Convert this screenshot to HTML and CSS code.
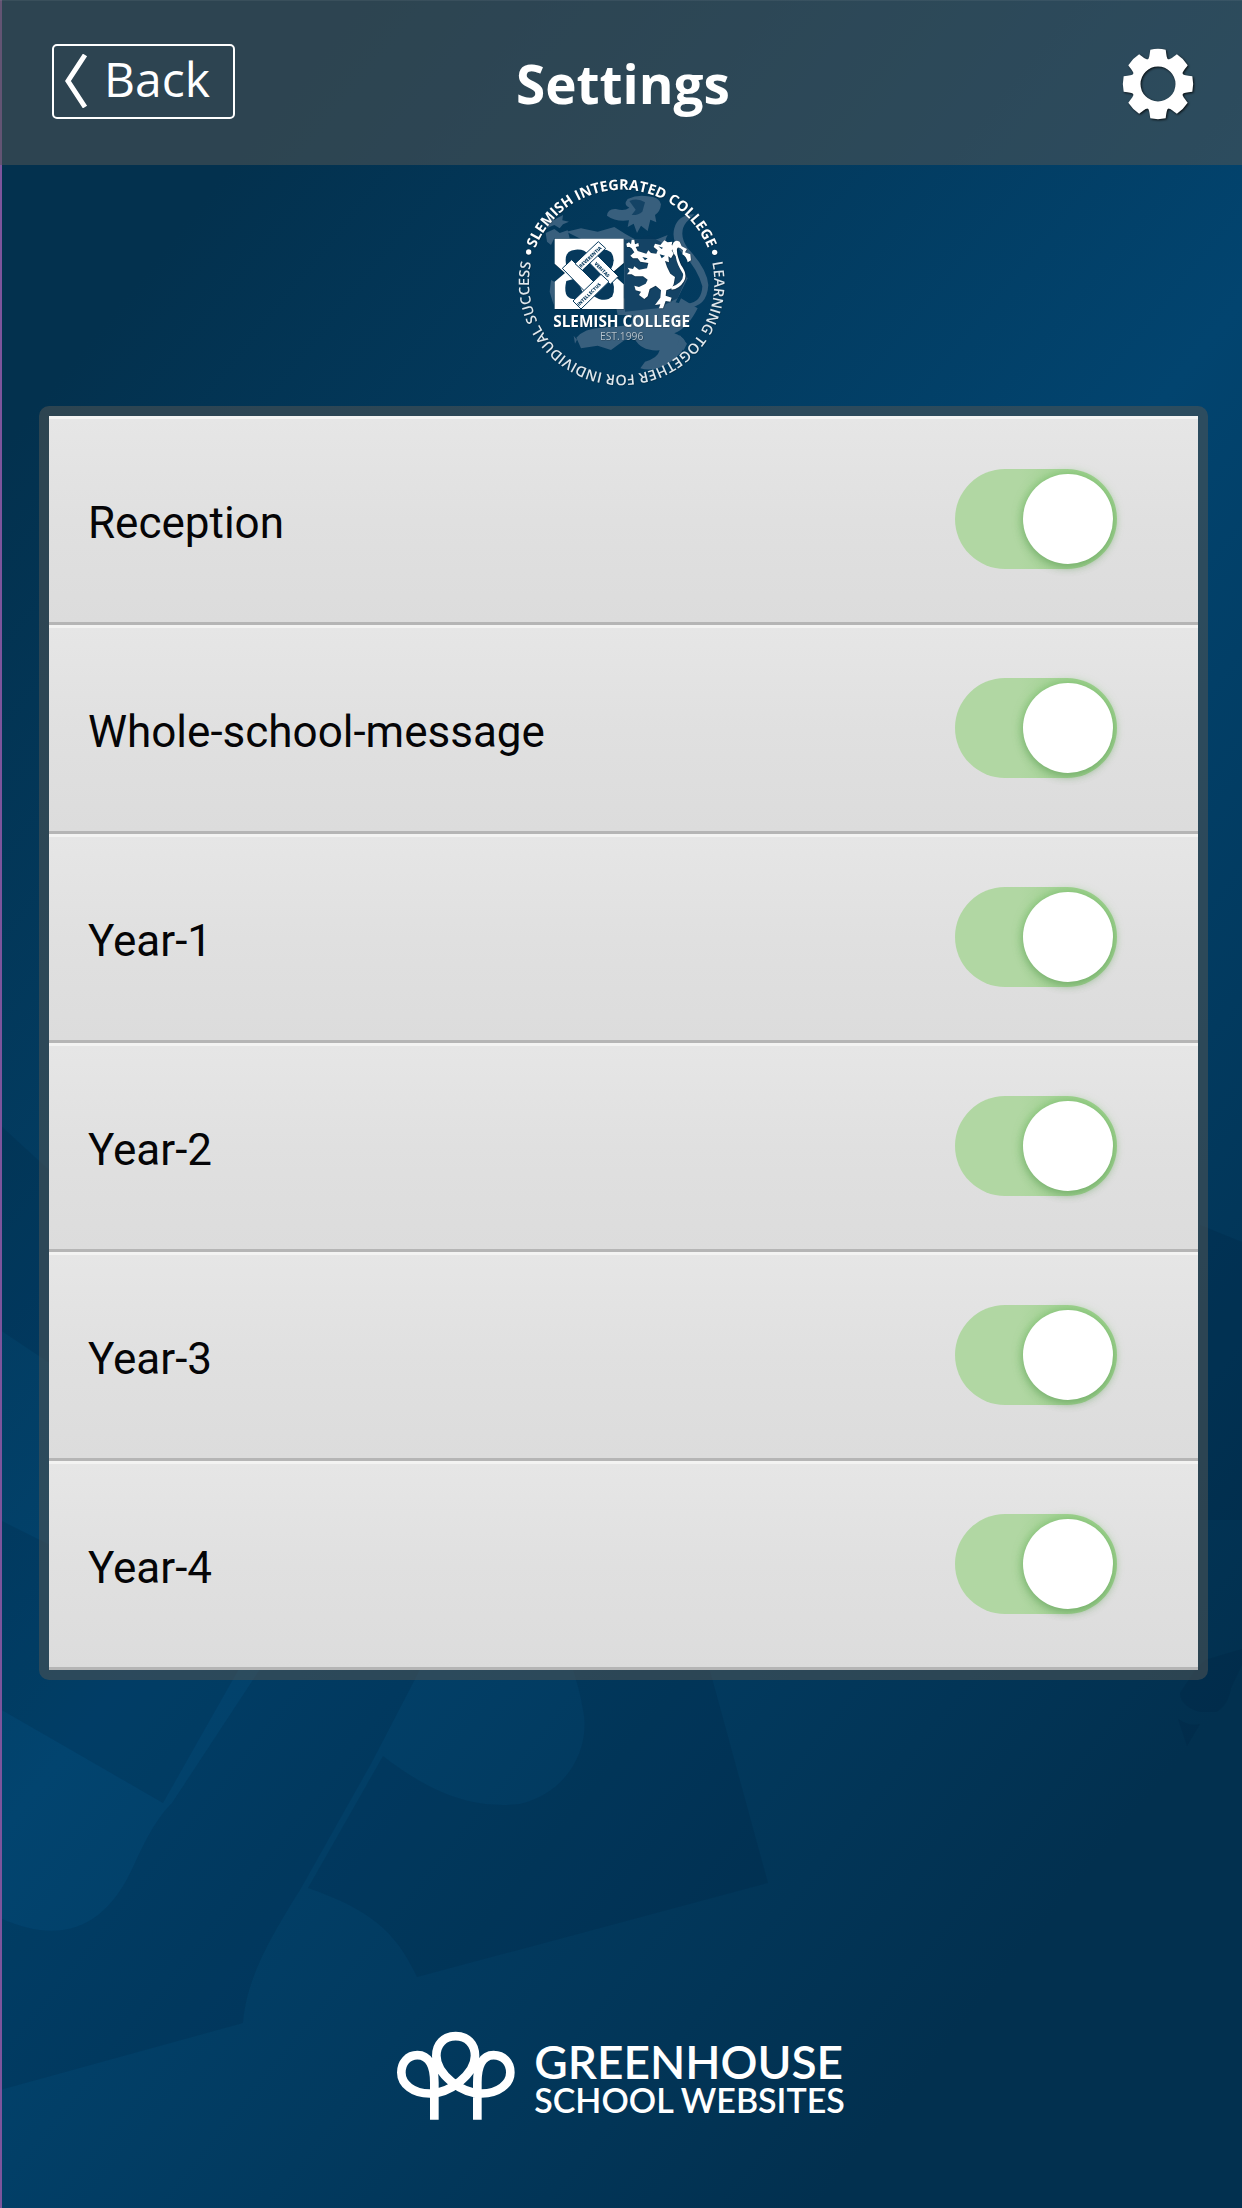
FILE: index.html
```html
<!DOCTYPE html>
<html lang="en">
<head>
<meta charset="utf-8">
<meta name="viewport" content="width=device-width, initial-scale=1">
<title>Settings</title>
<link rel="stylesheet" href="styles.css">
</head>
<body class="app">
<svg class="backdrop" viewBox="0 0 1242 2208" preserveAspectRatio="none" aria-hidden="true">
  <g fill="#021c33" fill-opacity=".15">
    <path d="M0 1125L60 1180V1370L0 1330Z"/>
    <path d="M0 1520L60 1550V1660L244 1660L163 1803L0 1709Z"/>
    <path d="M266 1660H425L372 1762L300 1890C262 1950 246 1985 243 2023L0 2090V1918C60 1945 105 1930 134 1865C150 1830 160 1815 172 1803Z"/>
    <path d="M383 1756C440 1800 480 1808 520 1804C575 1790 590 1740 583 1710Q580 1690 570 1660H707L768 1883L417 1977C395 1930 370 1910 308 1888Z"/>
    <path d="M1200 1225L1242 1242V1520H1200Z"/>
    <path d="M1195 1670L1180 1693Q1180 1706 1200 1712H1216Q1228 1706 1231 1688L1242 1665V1649L1205 1660Z"/>
    <path d="M1178 1719Q1190 1727 1200 1724L1187 1746Z"/>
  </g>
</svg>

<header class="topbar">
  <button class="back" type="button">
    <svg class="back-icon" viewBox="0 0 24 54" aria-hidden="true"><path d="M21 1L4 27L21 53" fill="none" stroke="#fff" stroke-width="5"/></svg>
    <span>Back</span>
  </button>
  <h1 class="title">Settings</h1>
  <button class="gear" type="button" aria-label="Settings menu">
    <svg class="gear-icon" viewBox="-108 -108 216 216" aria-hidden="true">
      <defs><path id="tooth" d="M-33 -70C-25 -78 -26 -86 -23 -103Q0 -108 23 -103C26 -86 25 -78 33 -70Z"/></defs>
      <circle r="66" fill="none" stroke="#fff" stroke-width="27"/>
      <g fill="#fff">
        <use href="#tooth"/><use href="#tooth" transform="rotate(45)"/><use href="#tooth" transform="rotate(90)"/><use href="#tooth" transform="rotate(135)"/>
        <use href="#tooth" transform="rotate(180)"/><use href="#tooth" transform="rotate(225)"/><use href="#tooth" transform="rotate(270)"/><use href="#tooth" transform="rotate(315)"/>
      </g>
    </svg>
  </button>
</header>

<main class="content">
  <svg class="crest" viewBox="0 0 720 690" role="img" aria-label="Slemish Integrated College crest">
    <defs>
      <path id="ring" d="M362 630A278 278 0 0 1 362 74A278 278 0 0 1 362 630"/>
      <path id="ring-low" d="M362 74A278 278 0 0 1 362 630A278 278 0 0 1 362 74"/>
    </defs>
    <g fill="#385f7d">
      <path d="M318 152Q320 130 345 132Q370 140 385 128Q365 120 380 102Q410 88 440 94Q475 96 480 118Q478 140 462 150L466 172L448 164L440 198L420 182L408 204L398 176L380 186L384 166Q345 172 318 152Z"/>
      <path d="M128 170L150 158L160 164L186 150L184 166L204 170L186 178L176 190L160 180L140 188ZM134 204L160 192L176 204L200 196L206 220H160L150 240L138 230Z"/>
      <path d="M196 200L240 190L290 200L340 186L372 206L400 222H240ZM150 345L160 350L158 420L146 380Z"/>
      <path d="M520 190Q530 150 580 148L556 172Q530 205 560 250Q618 310 622 360Q618 430 552 428L560 416Q602 412 604 364Q590 310 540 260Q510 225 520 190Z"/>
      <path d="M370 222H470L500 210Q480 240 520 270L560 340L520 420L450 432L400 430L370 400Z"/>
      <path d="M340 400H470L560 420Q540 450 520 450H350ZM400 430L520 445L540 400L590 430Q560 490 520 505Q560 520 552 545Q530 580 490 602Q450 620 418 610L432 590Q470 580 476 556Q420 560 400 520L370 526L330 555L290 542L240 550L226 518Q250 490 300 488L390 480Z"/>
      <path d="M536 510L558 536L548 556L530 540ZM218 512L228 524L222 536Z"/>
    </g>
    <path fill="#05385b" d="M385 108Q410 98 432 112L424 140Q410 152 392 150L404 134ZM470 226Q440 200 420 222L372 224V440L470 430L530 400L560 330L530 262Z" fill-opacity=".7"/>
    <g class="crest-ring">
      <text class="ring-bold"><textPath href="#ring" startOffset="50%" text-anchor="middle">SLEMISH INTEGRATED COLLEGE</textPath></text>
      <text class="ring-text"><textPath href="#ring-low" startOffset="50%" text-anchor="middle">LEARNING TOGETHER FOR INDIVIDUAL SUCCESS</textPath></text>
      <circle cx="83" cy="261" r="8"/><circle cx="641" cy="262" r="8"/>
    </g>
    <g class="crest-mark">
      <path fill="#fff" d="M161 221H368V294L332 325L368 358V432H161V350L192 324L161 296Z"/>
      <g fill="#06395c">
        <path d="M196 302Q186 256 224 254Q252 252 262 270L226 318Z"/>
        <path d="M272 270Q300 240 330 262Q346 284 330 312L300 318L262 290Z"/>
        <path d="M196 348Q184 398 216 402Q236 404 250 392L226 340Z"/>
        <path d="M276 392Q312 416 334 394Q346 368 330 340L300 332L266 372Z"/>
        <path d="M226 326L262 290L300 326L264 364Z"/>
      </g>
      <g fill="#fff" stroke="#06395c" stroke-width="3">
        <path d="M184 310L212 284L288 360L260 388Z"/>
        <path d="M256 284L280 262L352 334L328 358Z"/>
        <path d="M222 296L292 230L314 250L244 316Z"/>
        <path d="M216 408L300 328L324 350L240 432Z"/>
      </g>
      <g class="knot-text">
        <text transform="translate(240 309) rotate(-43)">REVERENTIA</text>
        <text transform="translate(279 297) rotate(45)">VERITAS</text>
        <text transform="translate(234 424) rotate(-44)">INTELLECTUS</text>
      </g>
      <g fill="#fff">
        <path d="M376 236L384 232L390 238L392 224H400L402 238L412 234L414 244L404 246L410 258L436 266L442 256L450 264L466 266L470 256L458 246L462 236L478 240L490 226L500 232L514 230L512 240L522 246L512 256L518 266L510 280L502 274L504 292L492 288L498 306L508 326L522 336L518 358L512 370L496 376L494 392L512 398L508 410L494 408L486 430L474 430L478 418L462 420L478 398L480 376L464 362L446 372L440 394L430 402L414 390L420 380L404 376L400 362L414 366L434 356L440 344L426 334L402 334L392 328L378 328L386 318L380 308L396 312L400 304L414 314L438 310L442 294L418 290L410 280L396 280L388 272L400 262L392 250L386 246L378 246Z"/>
        <path d="M510 366Q550 352 546 326Q528 300 524 274Q506 250 518 232Q524 224 536 230L542 244L558 252L552 262L568 268L570 286L560 292Q556 274 544 268L546 256Q532 242 528 252Q526 268 540 300Q562 330 548 350Q534 372 512 374Z"/>
      </g>
      <path fill="#06395c" d="M472 244L486 248L482 252ZM476 268L492 272L482 280ZM424 276L440 280L432 286Z"/>
      <text class="crest-name" x="362" y="486" text-anchor="middle">SLEMISH COLLEGE</text>
      <text class="crest-est" x="362" y="524" text-anchor="middle">EST.1996</text>
    </g>
  </svg>

  <ul class="panel">
    <li class="row"><label class="label" for="s1">Reception</label><input class="switch" id="s1" type="checkbox" role="switch" checked></li>
    <li class="row"><label class="label" for="s2">Whole-school-message</label><input class="switch" id="s2" type="checkbox" role="switch" checked></li>
    <li class="row"><label class="label" for="s3">Year-1</label><input class="switch" id="s3" type="checkbox" role="switch" checked></li>
    <li class="row"><label class="label" for="s4">Year-2</label><input class="switch" id="s4" type="checkbox" role="switch" checked></li>
    <li class="row"><label class="label" for="s5">Year-3</label><input class="switch" id="s5" type="checkbox" role="switch" checked></li>
    <li class="row"><label class="label" for="s6">Year-4</label><input class="switch" id="s6" type="checkbox" role="switch" checked></li>
  </ul>
</main>

<footer class="footer">
  <svg class="trees" viewBox="57 61 354 266" aria-hidden="true">
    <path d="M169 327V215C169 165 152 133 118 133C90 133 70 155 70 185C70 220 105 248 155 248C215 248 291 190 291 135C291 100 268 76 233 76C198 76 175 100 175 135C175 190 250 248 311 248C360 248 397 220 397 185C397 155 376 133 347 133C313 133 298 165 298 215V327" fill="none" stroke="#fff" stroke-width="26"/>
  </svg>
  <p class="brand"><span class="brand-top">GREENHOUSE</span><span class="brand-sub">SCHOOL WEBSITES</span></p>
</footer>
</body>
</html>
```
FILE: styles.css
```css
* {
  box-sizing: border-box;
}

.app {
  position: relative;
  display: flex;
  flex-direction: column;
  min-height: 100vh;
  margin: 0;
  background: linear-gradient(129deg, #03314e 12%, #02446f 49%, #02304f 86%);
  box-shadow: inset 2px 0 #7d549c;
  color: #fff;
  font-family: "Open Sans", "Noto Sans", sans-serif;
}

.backdrop {
  position: absolute;
  inset: 0;
  z-index: -1;
  width: 100%;
  height: 100%;
}

.topbar {
  display: grid;
  grid-template-columns: 1fr auto 1fr;
  align-items: center;
  height: 165px;
  padding: 0 48px 4px 52px;
  border-top: 1px solid rgba(255, 255, 255, 0.06);
  background: rgba(79, 83, 84, 0.56);
}

.back {
  display: flex;
  align-items: center;
  justify-self: start;
  gap: 16px;
  height: 75px;
  padding: 0 23px 4px 10px;
  border: 2px solid #fff;
  border-radius: 5px;
  background: none;
  color: inherit;
  font: 400 48px/68px "Open Sans", sans-serif;
}

.back-icon {
  width: 24px;
  height: 54px;
  margin-top: 4px;
}

.title {
  margin: 0;
  padding-top: 6px;
  font-size: 53px;
  font-weight: 700;
  line-height: 72px;
}

.gear {
  justify-self: end;
  width: 72px;
  height: 72px;
  margin-top: 6px;
  padding: 0;
  border: 0;
  background: none;
}

.gear-icon {
  display: block;
  width: 72px;
  height: 72px;
  filter: drop-shadow(1px 1px 1px rgba(0, 0, 0, 0.8));
}

.content {
  display: flex;
  flex-direction: column;
  align-items: center;
}

.crest {
  width: 240px;
  height: 230px;
}

.crest-ring,
.crest-mark {
  filter: drop-shadow(1px 1px 1px rgba(0, 0, 0, 0.5));
}

.crest-ring {
  fill: #fff;
}

.ring-bold {
  font-size: 43px;
  font-weight: 700;
}

.ring-text {
  font-size: 43px;
  font-weight: 600;
  fill: #dfe8ee;
}

.knot-text {
  font-size: 14px;
  font-weight: 800;
  fill: #06395c;
}

.crest-name {
  font-size: 46px;
  font-weight: 700;
  fill: #fff;
}

.crest-est {
  font-size: 31px;
  fill: #b4c4d0;
}

.panel {
  align-self: stretch;
  margin: 11px 34px 0 39px;
  padding: 0;
  border: 10px solid rgba(79, 83, 84, 0.56);
  border-radius: 10px;
  background-clip: padding-box;
  list-style: none;
}

.row {
  display: flex;
  align-items: center;
  justify-content: space-between;
  height: 209px;
  padding: 0 81px 0 39px;
  border-top: 3px solid #f3f3f2;
  border-bottom: 3px solid #b5b5b5;
  background: linear-gradient(#e6e6e6, #e0e0e0 50%, #dcdcdc);
  color: #050507;
}

.label {
  padding-top: 5px;
  font: 400 44px/56px Roboto, sans-serif;
}

.switch {
  appearance: none;
  flex: none;
  width: 162px;
  height: 100px;
  margin: 0 0 3px;
  padding: 5px 4px;
  border-radius: 50px;
  background: #c4c4c4;
}

.switch::before {
  content: "";
  display: block;
  width: 90px;
  height: 90px;
  border-radius: 50%;
  background: #fff;
}

.switch:checked {
  background: linear-gradient(90deg, #b1d7a3 40%, #a2d293 75%);
}

.switch:checked::before {
  margin-left: auto;
  box-shadow: 0 4px 8px rgba(70, 120, 70, 0.3), 0 0 8px 2px rgba(120, 195, 105, 0.6);
}

.footer {
  display: flex;
  align-items: center;
  justify-content: center;
  gap: 19px;
  margin-top: auto;
  padding-bottom: 88px;
}

.trees {
  width: 118px;
  height: 89px;
}

.brand {
  display: flex;
  flex-direction: column;
  margin: 0;
  padding-top: 8px;
  font-family: Lato, sans-serif;
  font-weight: 600;
}

.brand-top {
  font-size: 46px;
  line-height: 40px;
}

.brand-sub {
  font-size: 34px;
  line-height: 36px;
}
```
